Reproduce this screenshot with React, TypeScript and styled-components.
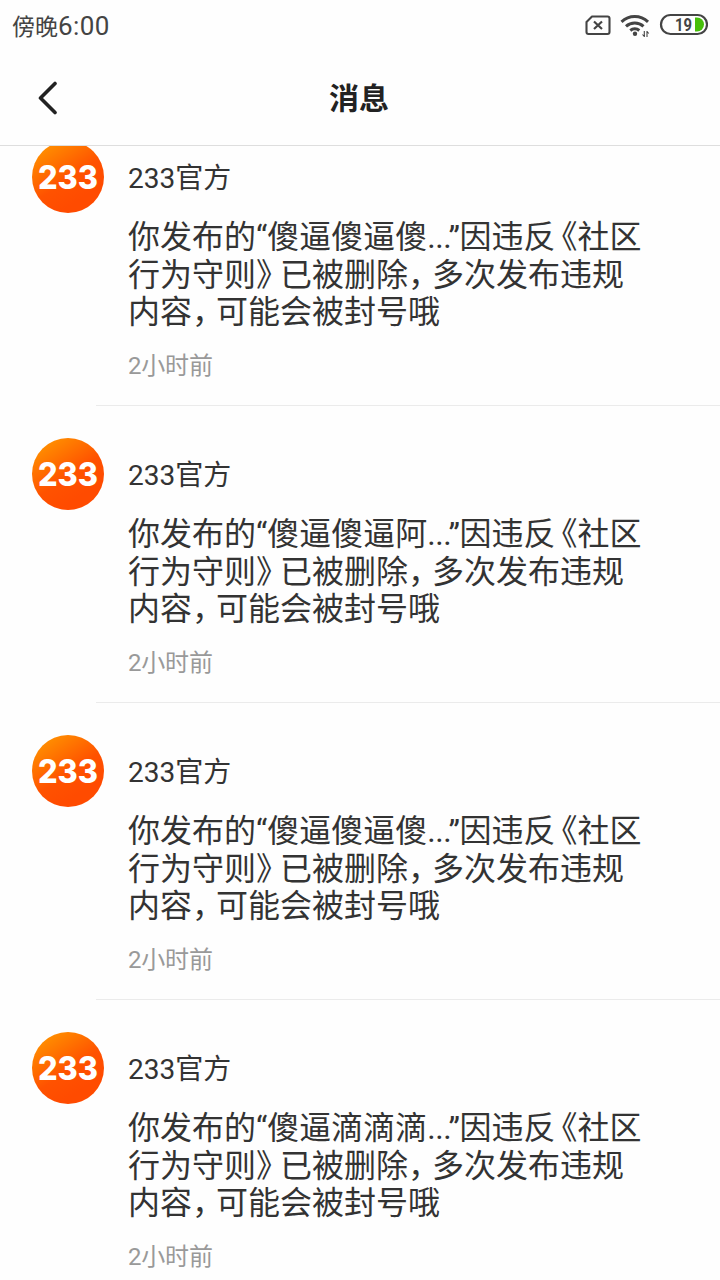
import React from 'react';
import styled, { createGlobalStyle } from 'styled-components';

const GlobalStyle = createGlobalStyle`
  * {
    box-sizing: border-box;
  }
  body {
    margin: 0;
    background-color: #fefefe;
    font-family: Roboto, 'Noto Sans CJK SC', sans-serif;
  }
`;
const Screen = styled.div`
  display: flex;
  flex-direction: column;
  width: 720px;
  height: 1280px;
  overflow: hidden;
  background-color: #fefefe;
`;
const StatusBar = styled.div`
  display: flex;
  align-items: center;
  justify-content: space-between;
  height: 50px;
  padding: 0 12px;
  color: #444;
`;
const Clock = styled.div`
  padding-top: 4px;
  font-size: 26px;
  line-height: 30px;
  letter-spacing: 0.4px;
`;
const Period = styled.span`
  font-size: 23px;
  letter-spacing: 0;
`;
const StatusIcons = styled.div`
  display: flex;
  align-items: center;
`;
const Header = styled.header`
  display: grid;
  grid-template-columns: 96px 1fr 98px;
  align-items: center;
  height: 96px;
  border-bottom: 1px solid #dedede;
`;
const BackButton = styled.button`
  display: flex;
  justify-content: center;
  padding: 0;
  border: 0;
  background: none;
`;
const Title = styled.h1`
  margin: 0;
  padding-top: 2px;
  font-size: 30px;
  font-weight: 700;
  line-height: 36px;
  text-align: center;
  color: #222;
`;
const ScrollArea = styled.main`
  flex: 1;
  min-height: 0;
  overflow: hidden;
`;
const MessageList = styled.ul`
  margin: -37px 0 0;
  padding: 0;
  list-style: none;
`;
const Row = styled.li`
  display: flex;
  height: 297px;
  padding-left: 32px;
`;
const Avatar = styled.div`
  flex: none;
  width: 64px;
  padding-top: 32px;
`;
const Content = styled.div`
  flex: 1;
  padding: 53px 0 0 32px;
  border-bottom: 1px solid #ebebeb;
`;
const Name = styled.div`
  font-size: 28px;
  line-height: 33px;
  color: #333;
`;
const Text = styled.p`
  margin: 24px 0 0;
  font-size: 32px;
  line-height: 37.5px;
  white-space: nowrap;
  color: #333;
`;
// half-width punctuation, padded on its open side
const Punct = styled.span<{ $opening?: boolean }>`
  font-feature-settings: 'halt';
  padding: ${(props) => (props.$opening ? '0 0 0 6px' : '0 8px 0 0')};
`;
const Dots = styled.span`
  letter-spacing: -0.5px;
`;
const Time = styled.div`
  margin-top: 20px;
  font-size: 24px;
  line-height: 28px;
  letter-spacing: -0.2px;
  color: #999;
`;

interface Imessage {
  id: number;
  quote: string;
}
const messages: Imessage[] = [
  { id: 1, quote: '傻逼傻逼傻' },
  { id: 2, quote: '傻逼傻逼阿' },
  { id: 3, quote: '傻逼傻逼傻' },
  { id: 4, quote: '傻逼滴滴滴' },
];

function Logo({ id }: { id: number }) {
  return (
    <svg width="72" height="72" viewBox="0 0 72 72">
      <defs>
        <linearGradient id={`logo${id}`} x1="0.1" y1="0.1" x2="0.6" y2="0.85">
          <stop offset="0" stopColor="#ff9100" />
          <stop offset="0.65" stopColor="#ff5200" />
          <stop offset="1" stopColor="#ff4b00" />
        </linearGradient>
      </defs>
      <circle cx="36" cy="36" r="36" fill={`url(#logo${id})`} />
      <text
        x="6"
        y="47.500"
        fontFamily="Inter, sans-serif"
        fontWeight="800"
        fontSize="32"
        textLength="60"
        lengthAdjust="spacingAndGlyphs"
        fill="#fff"
      >
        233
      </text>
    </svg>
  );
}

function Message({ message }: { message: Imessage }) {
  return (
    <Row>
      <Avatar>
        <Logo id={message.id} />
      </Avatar>
      <Content>
        <Name>233官方</Name>
        <Text>
          你发布的“{message.quote}
          <Dots>...”</Dots>因违反<Punct $opening>《</Punct>社区
          <br />
          行为守则<Punct>》</Punct>已被删除<Punct>，</Punct>多次发布违规
          <br />
          内容<Punct>，</Punct>可能会被封号哦
        </Text>
        <Time>2小时前</Time>
      </Content>
    </Row>
  );
}

function App() {
  return (
    <Screen>
      <GlobalStyle />
      <StatusBar>
        <Clock>
          <Period>傍晚</Period>6:00
        </Clock>
        <StatusIcons>
          <svg width="124" height="28" viewBox="584 11 124 28" fill="none" stroke="#444">
            <path d="M592 16.500h15.500a2 2 0 0 1 2 2v13.500a2 2 0 0 1-2 2h-19a2 2 0 0 1-2-2V22z" strokeWidth="2.100" strokeLinejoin="round" />
            <path d="M594 21.500l8 7.500m0-7.500l-8 7.500" strokeWidth="2.200" />
            <path d="M621.500 21.800a19.500 19.500 0 0 1 26.500 0M626 26.300a13 13 0 0 1 17.500 0M630.300 30.500a7 7 0 0 1 9 0" strokeWidth="3" />
            <circle cx="635" cy="33.800" r="2.200" fill="#444" stroke="none" />
            <path d="M644.300 31v6M642.500 34.500l1.800 2M647 37v-6M648.800 33.500l-1.800-2" strokeWidth="1.100" />
            <rect x="661" y="15" width="46" height="19" rx="9.500" strokeWidth="2.200" />
            <path d="M695 17.500h2a7 7 0 0 1 0 14h-2z" fill="#46bf0a" stroke="none" />
            <text x="675" y="31" fontFamily="Roboto, sans-serif" fontWeight="700" fontSize="17.500" textLength="17" lengthAdjust="spacingAndGlyphs" fill="#444" stroke="none">
              19
            </text>
          </svg>
        </StatusIcons>
      </StatusBar>
      <Header>
        <BackButton>
          <svg width="22" height="34" viewBox="0 0 22 34" fill="none" stroke="#222" strokeWidth="3.600" strokeLinecap="round" strokeLinejoin="round">
            <path d="M18 2.500L3.500 17 18 31.500" />
          </svg>
        </BackButton>
        <Title>消息</Title>
      </Header>
      <ScrollArea>
        <MessageList>
          {messages.map((message) => (
            <Message message={message} key={message.id} />
          ))}
        </MessageList>
      </ScrollArea>
    </Screen>
  );
}

export default App;
